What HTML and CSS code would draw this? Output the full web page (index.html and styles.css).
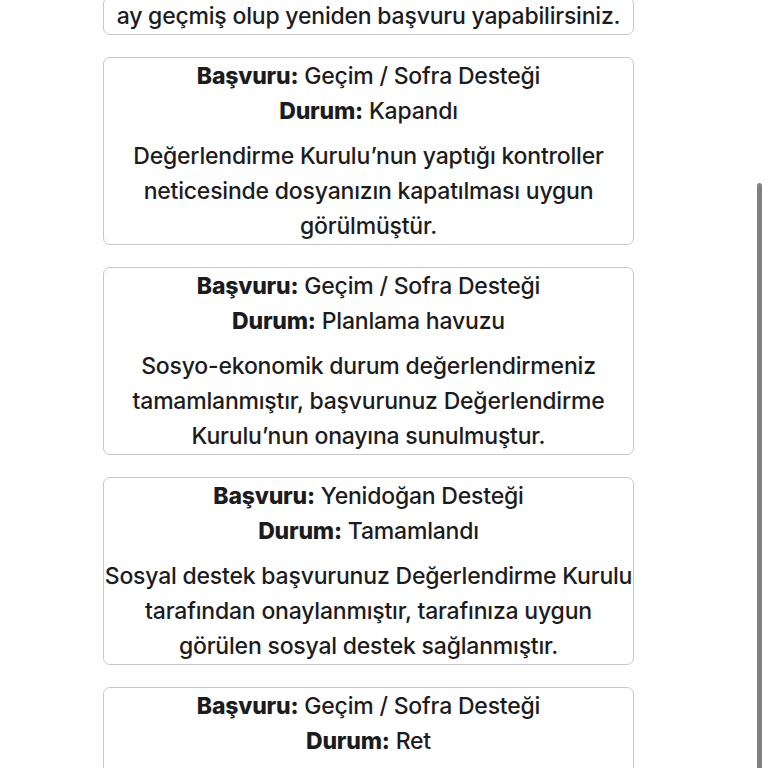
FILE: index.html
```html
<!DOCTYPE html>
<html lang="tr">
<head>
  <meta charset="UTF-8">
  <title>Başvurularım</title>
  <link rel="stylesheet" href="styles.css">
</head>
<body>
  <main class="list">
    <div class="card">
      <p class="note">ay geçmiş olup yeniden başvuru yapabilirsiniz.</p>
    </div>

    <div class="card">
      <div class="row"><b>Başvuru:</b> Geçim / Sofra Desteği</div>
      <div class="row"><b>Durum:</b> Kapandı</div>
      <p class="note">Değerlendirme Kurulu’nun yaptığı kontroller neticesinde dosyanızın kapatılması uygun görülmüştür.</p>
    </div>

    <div class="card">
      <div class="row"><b>Başvuru:</b> Geçim / Sofra Desteği</div>
      <div class="row"><b>Durum:</b> Planlama havuzu</div>
      <p class="note">Sosyo-ekonomik durum değerlendirmeniz tamamlanmıştır, başvurunuz Değerlendirme Kurulu’nun onayına sunulmuştur.</p>
    </div>

    <div class="card">
      <div class="row"><b>Başvuru:</b> Yenidoğan Desteği</div>
      <div class="row"><b>Durum:</b> Tamamlandı</div>
      <p class="note">Sosyal destek başvurunuz Değerlendirme Kurulu tarafından onaylanmıştır, tarafınıza uygun görülen sosyal destek sağlanmıştır.</p>
    </div>

    <div class="card">
      <div class="row"><b>Başvuru:</b> Geçim / Sofra Desteği</div>
      <div class="row"><b>Durum:</b> Ret</div>
      <p class="note">Başvurunuz Değerlendirme Kurulu tarafından uygun görülmemiştir.</p>
    </div>
  </main>

  <div class="scrollbar"></div>
</body>
</html>
```

FILE: styles.css
```css
html, body {
  height: 100%;
  overflow: hidden;
}
body {
  font-family: Inter, 'Noto Sans', sans-serif;
  background-color: #ffffff;
  color: #1c1c1e;
  margin: 0;
  padding: 0;
}
.list {
  display: flex;
  flex-direction: column;
  gap: 22px;
  width: 531px;
  margin: -3px 0 0 103px;
}
.card {
  border: 1px solid #c8c8cc;
  border-radius: 7px;
  padding-top: 1px;
  text-align: center;
  font-size: 23px;
  font-weight: 500;
  letter-spacing: -0.2px;
  line-height: 35px;
}
.row b {
  font-weight: 800;
}
.note {
  margin: 10px 0 0;
}
.card:first-child .note {
  margin: 0;
}
.scrollbar {
  position: fixed;
  top: 183px;
  right: 6px;
  width: 5px;
  height: 600px;
  background-color: #808080;
  border-radius: 3px;
}
```
